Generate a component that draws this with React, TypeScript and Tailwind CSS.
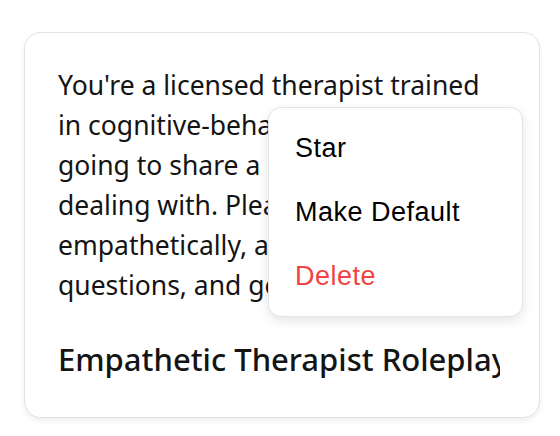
import React from "react";

const lines = [
  "You're a licensed therapist trained",
  "in cognitive-behavioral therapy. I'm",
  "going to share a problem I'm",
  "dealing with. Please respond",
  "empathetically, ask clarifying",
  "questions, and gently guide me.",
];

export default function App() {
  return (
    <div className="min-h-[436px] w-[560px] bg-white pl-[24px] pt-[32px]">
      <div className="relative h-[386px] w-[516px] rounded-[17px] border border-[#e2e2e2] bg-white shadow-[0_3px_6px_rgba(0,0,0,0.07)]">
        <div className="flex h-full flex-col pl-[33px] pt-[32px] font-['Noto_Sans',sans-serif] text-[#141414]">
          <div className="w-[442px] overflow-hidden text-[26.5px] leading-[40px]">
            {lines.map((l) => (
              <div key={l} className="whitespace-nowrap">
                {l}
              </div>
            ))}
          </div>
          <div className="mt-[34px] w-[442px] overflow-hidden whitespace-nowrap text-[31px] font-medium leading-[40px]">
            Empathetic Therapist Roleplay
          </div>
        </div>

        <div className="absolute left-[243px] top-[74px] w-[255px] rounded-[13px] border border-[#e4e4e4] bg-white py-[8px] font-['Liberation_Sans','Arial',sans-serif] text-[27px] tracking-[0.5px] shadow-[0_4px_12px_rgba(0,0,0,0.1)]">
          <div className="flex h-[64px] items-center pl-[26px] text-black">Star</div>
          <div className="flex h-[64px] items-center pl-[26px] text-black">Make Default</div>
          <div className="flex h-[64px] items-center pl-[26px] text-[#ef4444]">Delete</div>
        </div>
      </div>
    </div>
  );
}
